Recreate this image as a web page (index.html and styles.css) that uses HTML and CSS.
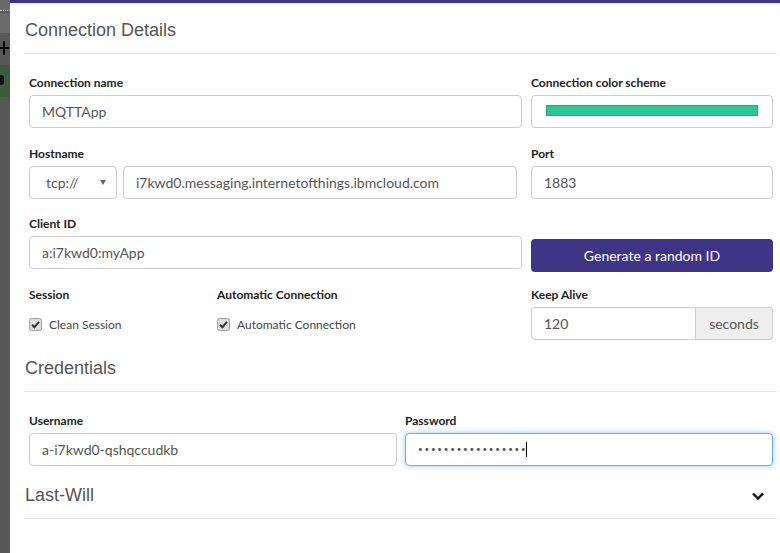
FILE: index.html
```html
<!DOCTYPE html>
<html>
<head>
<meta charset="utf-8">
<link rel="stylesheet" href="styles.css">
</head>
<body>
<div class="sidebar">
  <div class="sb-top"></div>
  <div class="sb-band"></div>
  <div class="sb-plus"><span class="plus-h"></span><span class="plus-v"></span></div>
  <div class="sb-green"><span class="sb-gear"></span></div>
</div>
<div class="main">
  <div class="section-head first">Connection Details</div>
  <div class="form">
    <div class="row r-main">
      <div class="group">
        <div class="label">Connection name</div>
        <div class="input">MQTTApp</div>
      </div>
      <div class="group">
        <div class="label">Connection color scheme</div>
        <div class="input color"><span class="swatch"></span></div>
      </div>
    </div>
    <div class="row r-main">
      <div class="group">
        <div class="label">Hostname</div>
        <div class="host">
          <div class="input select">tcp://<span class="caret-down"></span></div>
          <div class="input hostname">i7kwd0.messaging.internetofthings.ibmcloud.com</div>
        </div>
      </div>
      <div class="group">
        <div class="label">Port</div>
        <div class="input">1883</div>
      </div>
    </div>
    <div class="row r-main">
      <div class="group">
        <div class="label">Client ID</div>
        <div class="input">a:i7kwd0:myApp</div>
      </div>
      <div class="group btn-group">
        <div class="btn">Generate a random ID</div>
      </div>
    </div>
    <div class="row r-opts last">
      <div class="group">
        <div class="label">Session</div>
        <div class="check"><svg class="cb" width="13" height="13" viewBox="0 0 13 13"><rect x="0.5" y="0.5" width="12" height="12" rx="2" fill="#dedede" stroke="#a0a0a0"/><path d="M3 6.8 L5.4 9.2 L10 3.8" fill="none" stroke="#333" stroke-width="2"/></svg>Clean Session</div>
      </div>
      <div class="group">
        <div class="label">Automatic Connection</div>
        <div class="check"><svg class="cb" width="13" height="13" viewBox="0 0 13 13"><rect x="0.5" y="0.5" width="12" height="12" rx="2" fill="#dedede" stroke="#a0a0a0"/><path d="M3 6.8 L5.4 9.2 L10 3.8" fill="none" stroke="#333" stroke-width="2"/></svg>Automatic Connection</div>
      </div>
      <div class="group">
        <div class="label">Keep Alive</div>
        <div class="input-group">
          <div class="input ig-input">120</div>
          <div class="addon">seconds</div>
        </div>
      </div>
    </div>
  </div>
  <div class="section-head cred-head">Credentials</div>
  <div class="form cred">
    <div class="row r-half last">
      <div class="group">
        <div class="label">Username</div>
        <div class="input">a-i7kwd0-qshqccudkb</div>
      </div>
      <div class="group">
        <div class="label">Password</div>
        <div class="input focus"><span class="dots">•••••••••••••••••</span><span class="cursor"></span></div>
      </div>
    </div>
  </div>
  <div class="section-head collapsible">
    <span>Last-Will</span>
    <svg class="chev" width="14" height="10" viewBox="0 0 14 10"><path d="M2 2.5 L7 7.5 L12 2.5" fill="none" stroke="#111" stroke-width="2.4"/></svg>
  </div>
</div>
</body>
</html>
```

FILE: styles.css
```css
html, body {
  margin: 0;
  padding: 0;
  height: 100%;
}
body {
  display: flex;
  background: #fff;
  font-family: Lato, "Open Sans", sans-serif;
  overflow: hidden;
}
.sidebar {
  width: 10px;
  flex: 0 0 10px;
  background: #575757;
  overflow: hidden;
}
.sb-top {
  height: 10px;
  background: #6a6a6a;
  border-bottom: 1px dotted #bbb;
}
.sb-band {
  height: 20px;
  margin-top: 2px;
  background: #6b6b6b;
}
.sb-plus {
  height: 32px;
  position: relative;
}
.plus-h {
  position: absolute;
  left: 0;
  top: 14px;
  width: 9px;
  height: 2px;
  background: #000;
}
.plus-v {
  position: absolute;
  left: 3px;
  top: 8px;
  width: 2px;
  height: 14px;
  background: #000;
}
.sb-green {
  height: 32px;
  background: #3e5a3c;
  position: relative;
}
.sb-gear {
  position: absolute;
  left: -4px;
  top: 10px;
  width: 8px;
  height: 10px;
  background: #111;
  border-radius: 3px;
}
.main {
  flex: 1;
  border-top: 3px solid #3f3585;
  padding: 0 3px 0 14px;
  box-shadow: inset 0 4px 4px -3px rgba(0,0,0,0.12);
}
.section-head {
  font: 18px/26px "Liberation Sans", Arial, sans-serif;
  color: #555;
  padding: 16px 0 10px 1px;
  border-bottom: 1px solid #e6e6e6;
}
.section-head.first {
  padding-top: 14px;
}
.section-head.cred-head {
  padding-top: 15px;
}
.section-head.collapsible {
  display: flex;
  justify-content: space-between;
  align-items: center;
  padding-top: 16px;
}
.chev {
  margin-right: 12px;
  margin-top: 2px;
}
.form {
  padding: 20px 4px 0 5px;
}
.form.cred {
  padding-top: 20px;
}
.row {
  display: grid;
  margin-bottom: 16.5px;
}
.row.last {
  margin-bottom: 0;
}
.r-main {
  grid-template-columns: 493px 242px;
  column-gap: 9px;
}
.r-opts {
  grid-template-columns: 188px 314px 242px;
}
.r-half {
  grid-template-columns: 368px 368px;
  column-gap: 8px;
}
.label {
  font-size: 12px;
  line-height: 17px;
  font-weight: 700;
  color: #222;
  margin-bottom: 4px;
}
.input {
  box-sizing: border-box;
  height: 33px;
  border: 1px solid #ccc;
  border-radius: 4px;
  padding: 0 12px;
  font-size: 14px;
  line-height: 31px;
  color: #555;
  background: #fff;
  white-space: nowrap;
  overflow: hidden;
}
.color {
  padding: 9px 14px 0 14px;
}
.swatch {
  display: block;
  height: 11px;
  background: #2cc894;
  border: 1px solid #24a87c;
  box-sizing: border-box;
}
.host {
  display: flex;
  gap: 6px;
}
.select {
  width: 88px;
  flex: 0 0 88px;
  padding-left: 16px;
  position: relative;
}
.caret-down {
  position: absolute;
  right: 10px;
  top: 13px;
  width: 0;
  height: 0;
  border-left: 3px solid transparent;
  border-right: 3px solid transparent;
  border-top: 5px solid #666;
}
.hostname {
  width: 394px;
  flex: 0 0 394px;
}
.btn-group {
  padding-top: 24px;
  margin-bottom: -3px;
}
.btn {
  height: 33px;
  background: #3f3486;
  border-radius: 4px;
  color: #fff;
  font-size: 14px;
  line-height: 33px;
  text-align: center;
}
.check {
  display: flex;
  align-items: center;
  height: 33px;
  padding-top: 3px;
  box-sizing: border-box;
  font-size: 12px;
  color: #444;
}
.cb {
  margin-right: 7px;
  flex: 0 0 13px;
}
.input-group {
  display: flex;
}
.ig-input {
  flex: 1;
  border-radius: 4px 0 0 4px;
}
.addon {
  box-sizing: border-box;
  width: 77px;
  height: 33px;
  border: 1px solid #ccc;
  border-left: 0;
  border-radius: 0 4px 4px 0;
  background: #eee;
  color: #555;
  font-size: 14px;
  line-height: 31px;
  text-align: center;
}
.focus {
  border-color: #66afe9;
  box-shadow: 0 0 6px rgba(102,175,233,0.6);
  display: flex;
  align-items: center;
}
.dots {
  font-size: 8px;
  letter-spacing: 1.8px;
  color: #555;
  line-height: 14px;
}
.cursor {
  display: inline-block;
  width: 1px;
  height: 15px;
  background: #000;
  margin-left: -1px;
}
```
